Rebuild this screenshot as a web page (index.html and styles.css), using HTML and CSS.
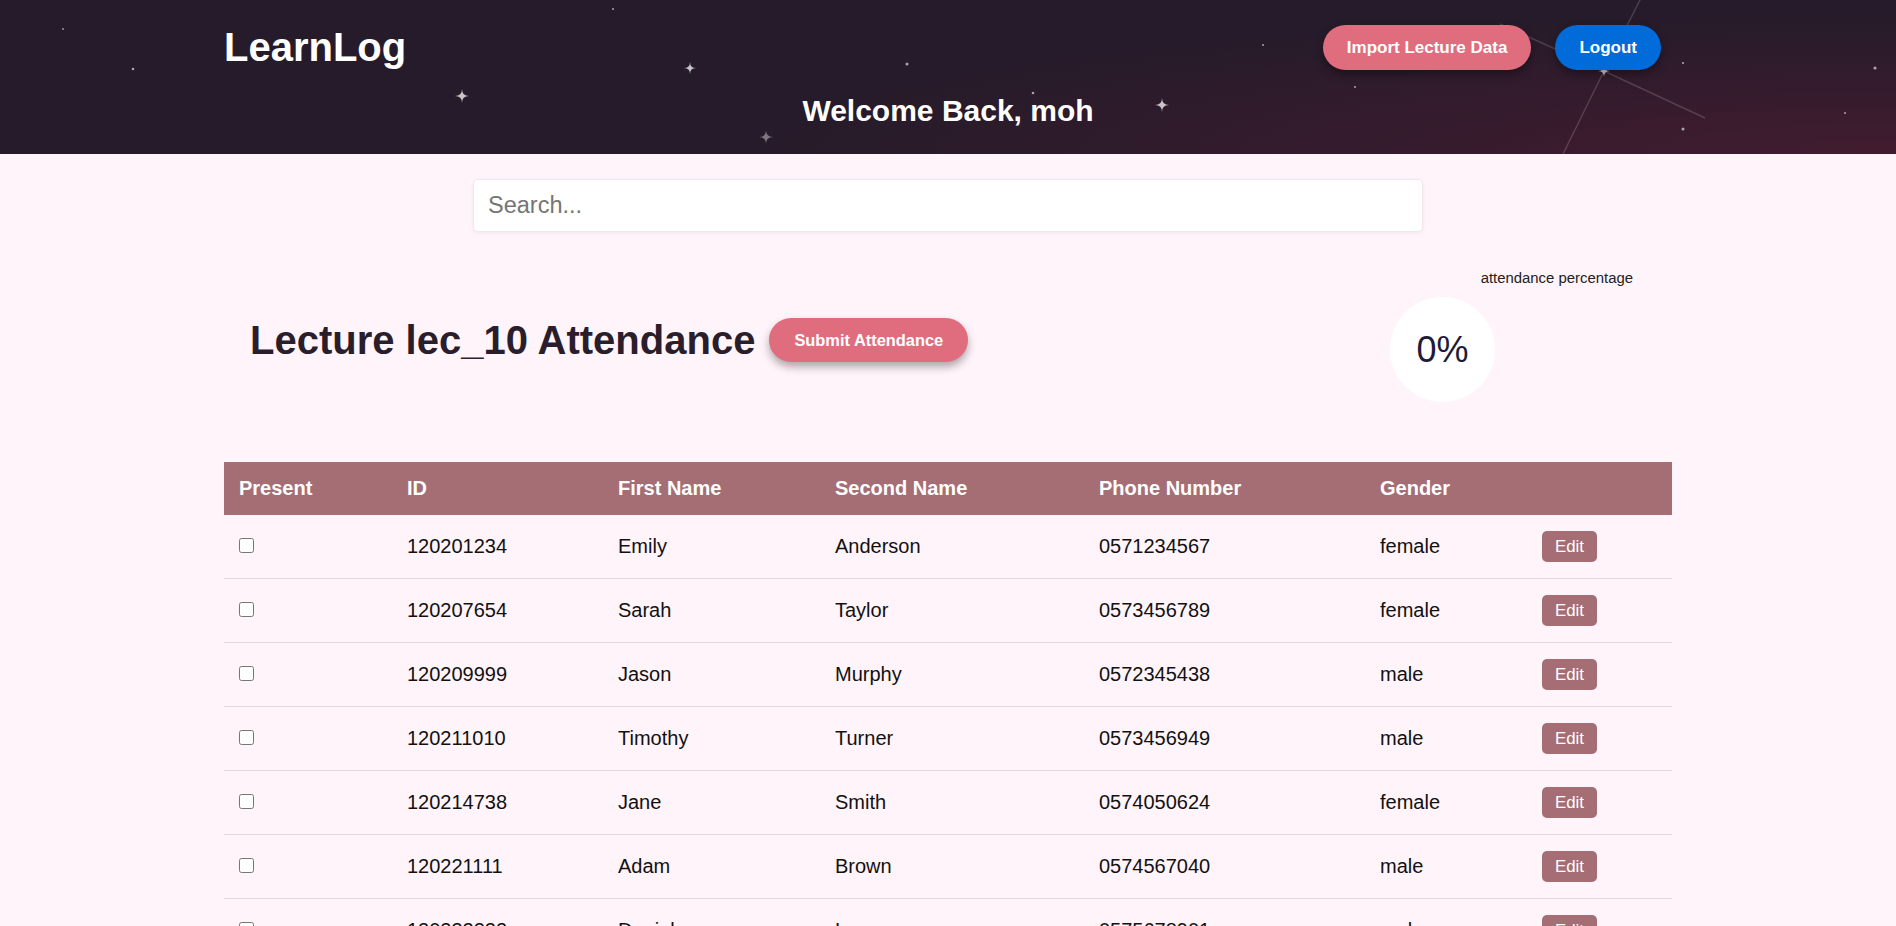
FILE: index.html
```html
<!DOCTYPE html>
<html lang="en">
<head>
<meta charset="utf-8">
<title>LearnLog</title>
<link rel="stylesheet" href="styles.css">
</head>
<body>
<header class="site-header">
  <svg class="sky" viewBox="0 0 1896 154" preserveAspectRatio="none" aria-hidden="true">
    <g stroke="rgba(255,255,255,0.16)" stroke-width="1.5" fill="none">
      <line x1="1604" y1="71" x2="1640" y2="0"/>
      <line x1="1604" y1="71" x2="1563" y2="154"/>
      <line x1="1604" y1="71" x2="1500" y2="24"/>
      <line x1="1604" y1="71" x2="1705" y2="118"/>
    </g>
    <g fill="rgba(255,255,255,0.75)">
      <path d="M462 89 Q462 96 469 96 Q462 96 462 103 Q462 96 455 96 Q462 96 462 89Z"/>
      <path d="M690 62 Q690 68 696 68 Q690 68 690 74 Q690 68 684 68 Q690 68 690 62Z"/>
      <path d="M1162 98 Q1162 105 1169 105 Q1162 105 1162 112 Q1162 105 1155 105 Q1162 105 1162 98Z"/>
      <path d="M1604 65 Q1604 71 1610 71 Q1604 71 1604 77 Q1604 71 1598 71 Q1604 71 1604 65Z"/>
    </g>
    <g fill="rgba(255,255,255,0.4)">
      <path d="M766 130 Q766 137 773 137 Q766 137 766 144 Q766 137 759 137 Q766 137 766 130Z"/>
    </g>
    <g fill="rgba(255,255,255,0.6)">
      <circle cx="133" cy="69" r="1.3"/>
      <circle cx="907" cy="64" r="1.5"/>
      <circle cx="1033" cy="93" r="1.3"/>
      <circle cx="1683" cy="63" r="1.1"/>
      <circle cx="1875" cy="68" r="1.6"/>
      <circle cx="1683" cy="129" r="1.5"/>
      <circle cx="1263" cy="45" r="1"/>
      <circle cx="613" cy="9" r="1"/>
      <circle cx="1355" cy="87" r="1"/>
      <circle cx="1845" cy="113" r="1"/>
      <circle cx="63" cy="29" r="0.9"/>
    </g>
  </svg>
  <div class="header-inner">
    <div class="top-row">
      <div class="logo">LearnLog</div>
      <div class="header-actions">
        <button class="btn btn-pink">Import Lecture Data</button>
        <button class="btn btn-blue">Logout</button>
      </div>
    </div>
    <h2 class="welcome">Welcome Back, moh</h2>
  </div>
</header>

<main class="container">
  <div class="search-wrap">
    <input class="search" type="text" placeholder="Search...">
  </div>

  <section class="lecture-bar">
    <div class="lecture-left">
      <h1 class="lecture-title">Lecture lec_10 Attendance</h1>
      <button class="btn btn-pink btn-submit">Submit Attendance</button>
    </div>
    <div class="percent-block">
      <div class="percent-label">attendance percentage</div>
      <div class="percent-circle">0%</div>
    </div>
  </section>

  <table class="students">
    <colgroup>
      <col class="c-present"><col class="c-id"><col class="c-first"><col class="c-second"><col class="c-phone"><col class="c-gender"><col class="c-edit">
    </colgroup>
    <thead>
      <tr><th>Present</th><th>ID</th><th>First Name</th><th>Second Name</th><th>Phone Number</th><th>Gender</th><th></th></tr>
    </thead>
    <tbody>
      <tr><td><input type="checkbox" class="chk"></td><td>120201234</td><td>Emily</td><td>Anderson</td><td>0571234567</td><td>female</td><td><button class="edit">Edit</button></td></tr>
      <tr><td><input type="checkbox" class="chk"></td><td>120207654</td><td>Sarah</td><td>Taylor</td><td>0573456789</td><td>female</td><td><button class="edit">Edit</button></td></tr>
      <tr><td><input type="checkbox" class="chk"></td><td>120209999</td><td>Jason</td><td>Murphy</td><td>0572345438</td><td>male</td><td><button class="edit">Edit</button></td></tr>
      <tr><td><input type="checkbox" class="chk"></td><td>120211010</td><td>Timothy</td><td>Turner</td><td>0573456949</td><td>male</td><td><button class="edit">Edit</button></td></tr>
      <tr><td><input type="checkbox" class="chk"></td><td>120214738</td><td>Jane</td><td>Smith</td><td>0574050624</td><td>female</td><td><button class="edit">Edit</button></td></tr>
      <tr><td><input type="checkbox" class="chk"></td><td>120221111</td><td>Adam</td><td>Brown</td><td>0574567040</td><td>male</td><td><button class="edit">Edit</button></td></tr>
      <tr><td><input type="checkbox" class="chk"></td><td>120232222</td><td>Daniel</td><td>Lee</td><td>0575678901</td><td>male</td><td><button class="edit">Edit</button></td></tr>
      <tr><td><input type="checkbox" class="chk"></td><td>120243333</td><td>Olivia</td><td>Clark</td><td>0576789012</td><td>female</td><td><button class="edit">Edit</button></td></tr>
    </tbody>
  </table>
</main>
</body>
</html>
```

FILE: styles.css
```css
* { box-sizing: border-box; }

html, body {
  margin: 0;
  padding: 0;
}

body {
  font-family: "Liberation Sans", Arial, sans-serif;
  background: #fff4fa;
  color: #111;
}

.site-header {
  position: relative;
  height: 154px;
  background:
    radial-gradient(ellipse 60% 90% at 100% 100%, rgba(70, 28, 48, 0.85) 0%, rgba(70, 28, 48, 0) 100%),
    #261b2a;
  overflow: hidden;
}

.sky {
  position: absolute;
  left: 0;
  top: 0;
  width: 100%;
  height: 100%;
}

.header-inner {
  position: relative;
  width: 1448px;
  margin: 0 auto;
  padding-top: 25px;
}

.top-row {
  display: flex;
  justify-content: space-between;
  align-items: center;
  padding-right: 11px;
}

.logo {
  color: #fff;
  font-size: 40px;
  font-weight: bold;
  line-height: 45px;
}

.header-actions {
  display: flex;
  gap: 24px;
}

.btn {
  border: none;
  border-radius: 23px;
  color: #fff;
  font-family: "Liberation Sans", Arial, sans-serif;
  font-weight: bold;
  font-size: 17px;
  height: 45px;
  padding: 0 24px;
  cursor: pointer;
  box-shadow: 0 4px 8px rgba(0, 0, 0, 0.35);
}

.btn-pink { background: #e06d7e; }
.btn-blue { background: #006bd9; }

.welcome {
  margin: 24px 0 0;
  text-align: center;
  color: #fff;
  font-size: 30px;
  font-weight: bold;
  line-height: 34px;
}

.container {
  width: 1448px;
  margin: 0 auto;
}

.search-wrap {
  display: flex;
  justify-content: center;
  padding-top: 25px;
}

.search {
  width: 950px;
  height: 53px;
  border: 1px solid #f0e8ec;
  border-radius: 5px;
  background: #fff;
  padding: 0 14px;
  font-family: "Liberation Sans", Arial, sans-serif;
  font-size: 23.5px;
  color: #333;
  box-shadow: 0 1px 4px rgba(0, 0, 0, 0.06);
  outline: none;
}

.search::placeholder { color: #757575; }

.lecture-bar {
  display: flex;
  justify-content: space-between;
  align-items: flex-start;
  margin-top: 38px;
}

.lecture-left {
  display: flex;
  align-items: center;
  gap: 14px;
  padding-left: 26px;
  margin-top: 47px;
}

.lecture-title {
  margin: 0;
  font-size: 40px;
  line-height: 46px;
  font-weight: bold;
  color: #2a1d2c;
}

.btn-submit {
  height: 44px;
  font-size: 16.4px;
  padding: 0 25px;
  box-shadow: 0 5px 9px rgba(0, 0, 0, 0.32);
}

.percent-block {
  display: flex;
  flex-direction: column;
  width: 243px;
  margin-right: 39px;
}

.percent-label {
  align-self: flex-end;
  font-size: 14.9px;
  line-height: 17px;
  color: #222;
}

.percent-circle {
  align-self: flex-start;
  margin-top: 10px;
  width: 105px;
  height: 105px;
  border-radius: 50%;
  background: #fff;
  display: flex;
  align-items: center;
  justify-content: center;
  font-size: 36px;
  color: #1d1b38;
}

.students {
  width: 100%;
  margin-top: 60px;
  border-collapse: collapse;
  table-layout: fixed;
  font-size: 20px;
}

.c-present { width: 168px; }
.c-id { width: 211px; }
.c-first { width: 217px; }
.c-second { width: 264px; }
.c-phone { width: 281px; }
.c-gender { width: 162px; }
.c-edit { width: 145px; }

.students th {
  background: #a56e75;
  color: #fff;
  font-weight: bold;
  text-align: left;
  height: 53px;
  padding: 0 15px;
  line-height: 23px;
}

.students td {
  padding: 16px 15px;
  height: 63px;
  line-height: 23px;
  border-bottom: 1px solid #dedbdd;
  color: #111;
  vertical-align: middle;
}

.chk {
  margin: 0;
  width: 15px;
  height: 15px;
  vertical-align: middle;
  position: relative;
  top: -2px;
}

.edit {
  background: #a56e75;
  color: #fff;
  border: none;
  border-radius: 5px;
  font-family: "Liberation Sans", Arial, sans-serif;
  font-size: 16.8px;
  height: 31px;
  padding: 0 13px;
  cursor: pointer;
}
```
